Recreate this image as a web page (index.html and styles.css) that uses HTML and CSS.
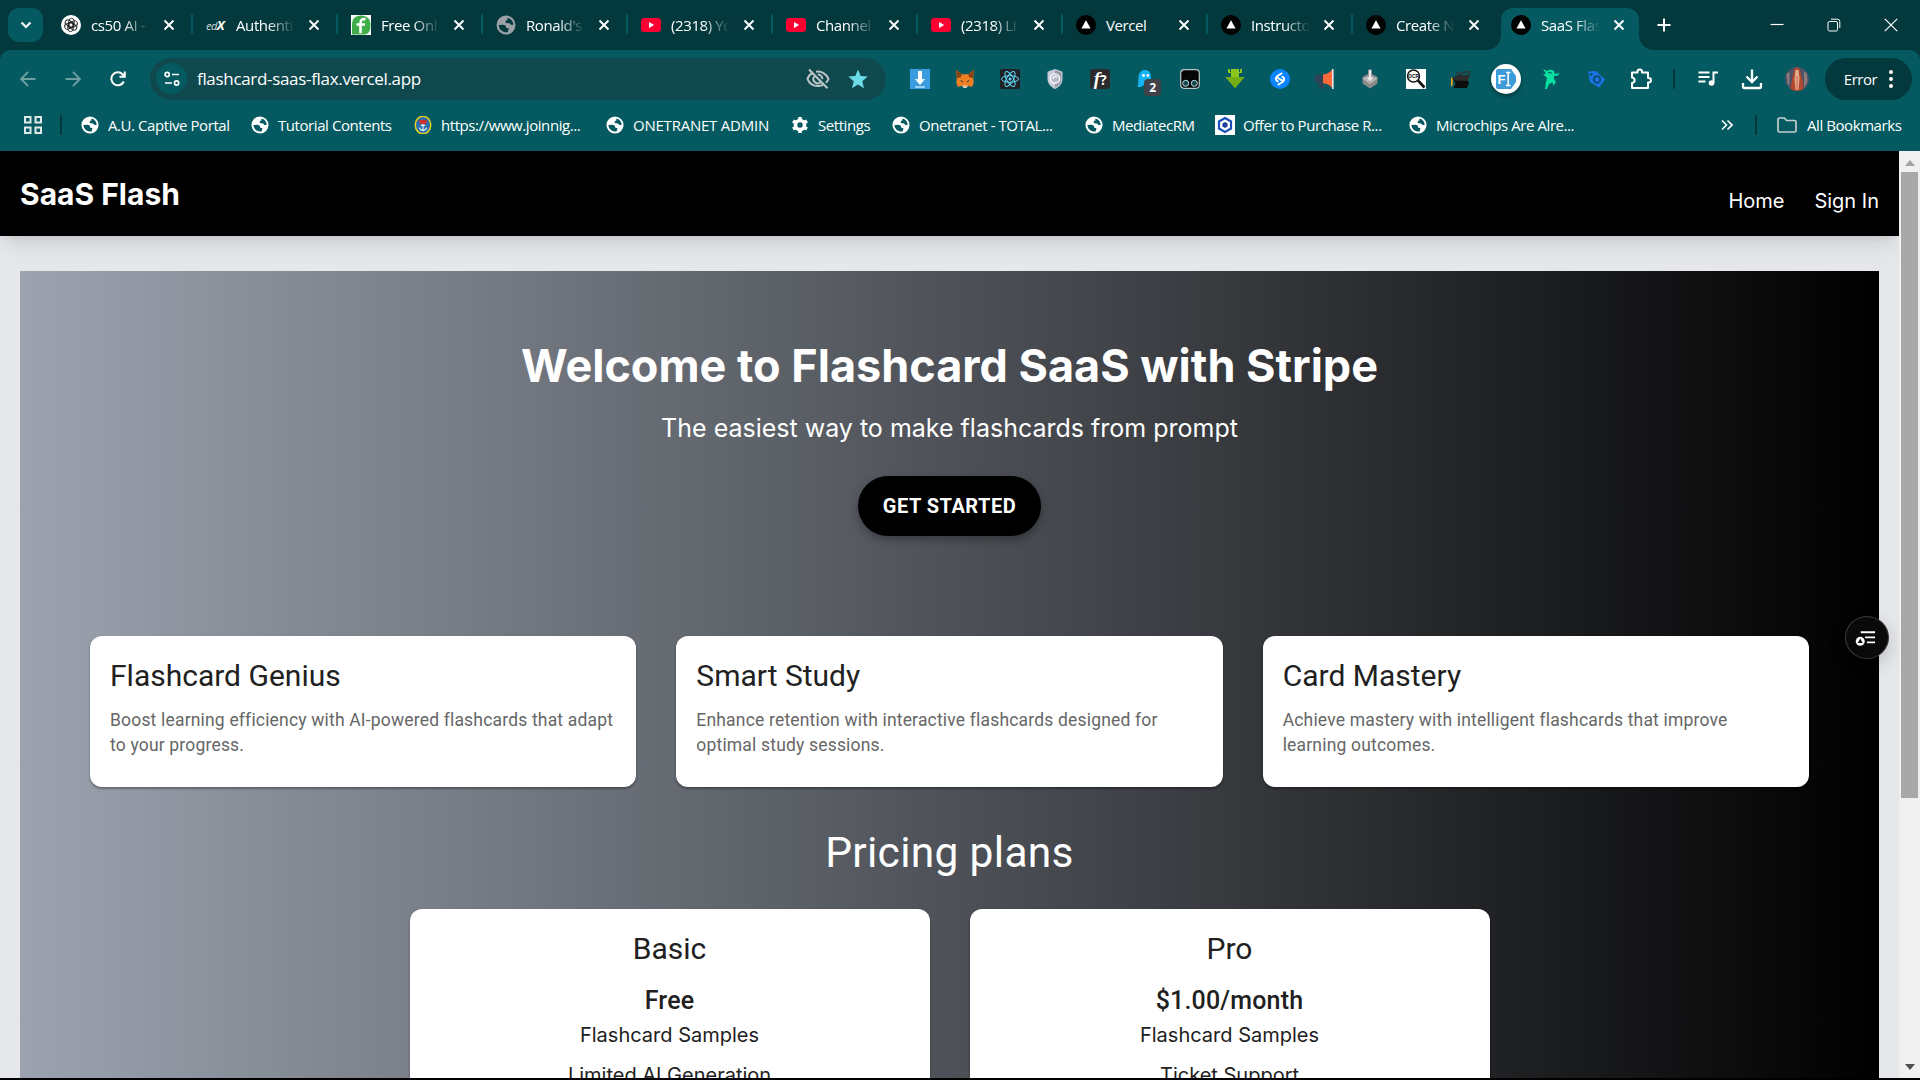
FILE: index.html
```html
<!DOCTYPE html>
<html lang="en">
<head>
<meta charset="utf-8">
<title>SaaS Flash</title>
<link rel="stylesheet" href="styles.css">
</head>
<body>
<svg class="defs" aria-hidden="true">
  <symbol id="x" viewBox="0 0 12 12"><path d="M1.5 1.5l9 9M10.500 1.500l-9 9" stroke="#fff" stroke-width="1.9" fill="none"/></symbol>
  <symbol id="globe" viewBox="0 0 20 20"><path d="M10 .5a9.500 9.500 0 1 0 0 19 9.500 9.500 0 0 0 0-19zM11.500 2.800C15 3.500 17.300 6.300 17.400 9.600 16 10.600 14.500 9.800 13.500 8.300L10.500 8C8.800 7.300 9.300 5.500 11.500 5zM2.700 10L7.300 9.800C9.800 10 10.300 11.800 10.300 13L12.800 13.600 11.800 17.200C7 17.800 2.900 14.600 2.700 10z" fill="currentColor" fill-rule="evenodd"/></symbol>
  <symbol id="yt" viewBox="0 0 20 20"><rect x="0" y="3" width="20" height="14" rx="3.500" fill="#ff0033"/><path d="M8 6.900v6.200l5.200-3.100z" fill="#fff"/></symbol>
  <symbol id="vercel" viewBox="0 0 20 20"><circle cx="10" cy="10" r="10" fill="#000"/><path d="M10 5.200l4.600 8.300H5.400z" fill="#fff"/></symbol>
</svg>

<div class="tabstrip">
  <div class="tab-search"><svg width="14" height="10" viewBox="0 0 14 10"><path d="M2.500 2.500L7 7l4.500-4.500" stroke="#fff" stroke-width="2.200" fill="none"/></svg></div>
  <div class="tabs">
    <div class="tab"><svg class="fav" viewBox="0 0 20 20"><circle cx="10" cy="10" r="10" fill="#fff"/><g fill="none" stroke="#222" stroke-width=".9"><rect id="petal" x="7.800" y="3.400" width="5.400" height="9" rx="2.700"/><use href="#petal" transform="rotate(60 10 10)"/><use href="#petal" transform="rotate(120 10 10)"/><use href="#petal" transform="rotate(180 10 10)"/><use href="#petal" transform="rotate(240 10 10)"/><use href="#petal" transform="rotate(300 10 10)"/></g></svg><span class="label">cs50 AI -</span><svg class="close"><use href="#x"/></svg></div>
    <div class="tab"><span class="fav edx">ed<b>X</b></span><span class="label">Authenti</span><svg class="close"><use href="#x"/></svg></div>
    <div class="tab"><svg class="fav" viewBox="0 0 20 20"><rect width="20" height="20" fill="#fff"/><path d="M10 .5c6 0 9.500 3.500 9.500 9.500s-2 9.500-6 9.500H1V10C1 4 4 .5 10 .5z" fill="#3fae49"/><path d="M14.500 4.200c-3.800-.5-5 1-5 4v10M5.500 9.500h8.500" stroke="#fff" stroke-width="2.600" fill="none"/></svg><span class="label">Free Onl</span><svg class="close"><use href="#x"/></svg></div>
    <div class="tab"><svg class="fav grey"><use href="#globe"/></svg><span class="label">Ronald's</span><svg class="close"><use href="#x"/></svg></div>
    <div class="tab"><svg class="fav"><use href="#yt"/></svg><span class="label">(2318) Yo</span><svg class="close"><use href="#x"/></svg></div>
    <div class="tab"><svg class="fav"><use href="#yt"/></svg><span class="label">Channel</span><svg class="close"><use href="#x"/></svg></div>
    <div class="tab"><svg class="fav"><use href="#yt"/></svg><span class="label">(2318) Li</span><svg class="close"><use href="#x"/></svg></div>
    <div class="tab"><svg class="fav"><use href="#vercel"/></svg><span class="label whole">Vercel</span><svg class="close"><use href="#x"/></svg></div>
    <div class="tab"><svg class="fav"><use href="#vercel"/></svg><span class="label">Instructo</span><svg class="close"><use href="#x"/></svg></div>
    <div class="tab last"><svg class="fav"><use href="#vercel"/></svg><span class="label">Create N</span><svg class="close"><use href="#x"/></svg></div>
    <div class="tab active"><svg class="fav"><use href="#vercel"/></svg><span class="label">SaaS Flas</span><svg class="close"><use href="#x"/></svg></div>
  </div>
  <svg class="plus" viewBox="0 0 14 14"><path d="M7 .5v13M.5 7h13" stroke="#fff" stroke-width="2"/></svg>
  <div class="win">
    <svg viewBox="0 0 14 14"><path d="M.5 6.500h13" stroke="#fff" stroke-width="1.200"/></svg>
    <svg viewBox="0 0 14 14"><rect x="1" y="3.500" width="9.500" height="9.500" rx="1.500" stroke="#fff" fill="none"/><path d="M4 1.200h6.500a2.300 2.300 0 0 1 2.300 2.300V10" stroke="#fff" fill="none"/></svg>
    <svg viewBox="0 0 14 14"><path d="M.8.8l12.400 12.400M13.200.8L.8 13.200" stroke="#fff" stroke-width="1.200"/></svg>
  </div>
</div>

<div class="toolbar">
  <div class="navrow">
    <div class="navbtns">
      <svg class="dim" viewBox="0 0 16 16"><path d="M15.500 8H1.500M8 1L1 8l7 7" stroke="currentColor" stroke-width="1.800" fill="none"/></svg>
      <svg class="dim" viewBox="0 0 16 16"><path d="M.5 8h14M8 1l7 7-7 7" stroke="currentColor" stroke-width="1.800" fill="none"/></svg>
      <svg viewBox="0 0 16 16"><path d="M13.800 10.500A6.500 6.500 0 1 1 12.600 3.300L14.500 5.300M14.800.5v5.300H9.500" stroke="#fff" stroke-width="2" fill="none"/></svg>
    </div>
    <div class="url">
      <div class="site"><svg width="16" height="16" viewBox="0 0 16 16" fill="none" stroke="#fff" stroke-width="1.700"><circle cx="3.200" cy="3.500" r="2.100"/><path d="M8 3.500h7M1 12h7"/><circle cx="12.600" cy="12" r="2.100"/></svg></div>
      <span class="address">flashcard-saas-flax.vercel.app</span>
      <svg class="eye" viewBox="0 0 24 22" fill="none" stroke="#bcc6c7" stroke-width="2"><path d="M7.500 4.500C4.800 5.700 2.500 8 1.500 10.800c1.700 4.500 6 7.200 10.500 7.200 1.700 0 3.300-.4 4.700-1M10 3.700c5.300-.8 10.500 2 12.500 7.100-.6 1.500-1.500 2.800-2.600 3.900M3 1.500l18.500 18.700M8.300 8.500a4.200 4.200 0 0 0 6 5.800M11.800 6.600a4.200 4.200 0 0 1 4.500 4.600"/></svg>
      <svg class="star" viewBox="0 0 20 20"><path d="M10 .5l2.700 6.600 7 .5-5.400 4.600 1.700 7L10 15.400l-6 3.800 1.700-7L.3 7.600l7-.5z" fill="#6cdbe8"/></svg>
    </div>
    <div class="exts">
      <svg viewBox="0 0 20 20"><rect width="20" height="20" fill="#3a9be0"/><path d="M8 2h4v8h3l-5 6-5-6h3zM5 17.500h10v1H5z" fill="#fff"/></svg>
      <svg viewBox="0 0 20 20"><path d="M1 1l6 4.300h6L19 1l-.8 8 .5 5-1.700 4-4-1.200L11 19H9l-2-2.200L3 18l-1.700-4 .5-5z" fill="#ef7f22"/><path d="M1 1l6 4.300-1.500 3.200L2 9zM19 1l-6 4.300 1.500 3.200L18 9z" fill="#8a4315"/><path d="M5 11l3 1-.5 1.500zM15 11l-3 1 .5 1.500z" fill="#263b47"/><path d="M7 16.500h6L11.500 19h-3z" fill="#d8c6b5"/></svg>
      <svg viewBox="0 0 20 20"><rect width="20" height="20" rx="2" fill="#202325"/><g fill="none" stroke="#61dafb" stroke-width="1"><ellipse cx="10" cy="10" rx="8.500" ry="3.300"/><ellipse cx="10" cy="10" rx="8.500" ry="3.300" transform="rotate(60 10 10)"/><ellipse cx="10" cy="10" rx="8.500" ry="3.300" transform="rotate(120 10 10)"/></g><circle cx="10" cy="10" r="1.500" fill="#61dafb"/></svg>
      <svg viewBox="0 0 20 20"><path d="M10 0l7.500 2.800v7c0 5-3.500 8.500-7.500 10.200C6 18.300 2.500 14.800 2.500 9.800v-7z" fill="#c9ccd8"/><path d="M10 1.200l6.300 2.400v6.200c0 4.300-2.800 7.300-6.300 8.900z" fill="#9498a8"/><circle cx="10" cy="9.500" r="4.600" fill="#b4b8c6" stroke="#fff" stroke-width="1.400"/><path d="M8 10a2.300 2.300 0 0 1 4-1.800" stroke="#fff" stroke-width="1.400" fill="none"/></svg>
      <div class="fq"><i>f</i>?</div>
      <div class="ghost"><svg viewBox="0 0 20 20"><path d="M2.500 18c1-2 .7-6 1-10C4 3.500 6.500 1 10 1s6 2.500 6 7v10l-3-2-2.500 2L8 16l-2 2z" fill="#15b2f4"/><circle cx="8.500" cy="6.500" r="1.400" fill="#fff"/><circle cx="12.800" cy="6.500" r="1.400" fill="#fff"/></svg><b>2</b></div>
      <svg viewBox="0 0 20 20"><rect x=".7" y=".7" width="18.600" height="18.600" rx="3.500" fill="#050505" stroke="#b9c6c8" stroke-width="1.200"/><circle cx="5.700" cy="14.300" r="3" fill="#17454a" stroke="#b8e0e4"/><circle cx="14.300" cy="14.300" r="3" fill="#17454a" stroke="#b8e0e4"/></svg>
      <svg viewBox="0 0 20 20"><path d="M3 0h2v3h1V0h8v3h1V0h2v4h-3v4h5.500L10 19 .5 8H6V4H3z" fill="#8cc61d"/><path d="M.5 8h19L10 19z" fill="#74ad16"/></svg>
      <svg viewBox="0 0 20 20"><circle cx="10" cy="10" r="10" fill="#0a84ff"/><path d="M11.500 4.500L7.500 7c-2.500 1.600-2 4.300.2 5.300M8.500 15.500l4-2.500c2.500-1.600 2-4.300-.2-5.300M8 9l4 2.300" stroke="#fff" stroke-width="2" fill="none" stroke-linecap="round"/></svg>
      <svg viewBox="0 0 20 20"><path d="M0 7c2-1.500 5-1.500 8-1.500v9H8l1 5H4.500l-1.200-5C1 14 0 12 0 11z" fill="#2f4257"/><path d="M8 5.500C12 5 15 3.500 17 .8v18c-2-2.800-5-4.300-9-4.600z" fill="#ff6a3a"/><path d="M17 0h1.600v20H17z" fill="#e2e8ec"/></svg>
      <svg viewBox="0 0 20 20"><path d="M10 4l7.500 4v6.500L10 19.500l-7.500-5V8z" fill="#8a8a8a"/><path d="M10 6l7.500 3.500L10 15 2.500 9.500z" fill="#b9b9b9"/><path d="M8.500.8h3V8h3L10 13 5.500 8h3z" fill="#e8e8e8" stroke="#888" stroke-width=".6"/></svg>
      <div class="ocr"><svg viewBox="0 0 20 20"><rect width="20" height="20" fill="#fff"/><circle cx="7.500" cy="7" r="6" fill="#f7f7f7" stroke="#111" stroke-width="1.400"/><path d="M12 11.500l6.500 7" stroke="#111" stroke-width="2.600"/></svg><span>OCR</span></div>
      <svg viewBox="0 0 22 20"><path d="M0 8l2 1-.500 9H0z" fill="#f6a21c"/><path d="M2 10h17l-1 2 2 2-2.500 6H2.500L5 15z" fill="#0c0c0c"/><path d="M6 3c4 3 8-1 11-1 3-.5 5 1 3 2" stroke="#333" stroke-width="1.500" fill="none"/><path d="M1 9.500l8-5 4 1.500 8-1-2.500 7H5z" fill="#2c2c2c"/></svg>
      <div class="fi"><svg viewBox="0 0 20 20"><path d="M0 2a2 2 0 0 1 2-2h13l5 7v6l-5 7H2a2 2 0 0 1-2-2z" fill="#3d9bd9"/><path d="M10 3.500h4.500M10 16.500h4.500M12.200 3.500v13" stroke="#fff" stroke-width="1.500"/></svg><b>F</b></div>
      <svg viewBox="0 0 20 20"><path d="M2 0l4 2 3-1.500 3.500 1L14 5l4.500-1L17 6.500l-4 .5 0 3 2 3-2.500 3.500-1-3L8 15l-2 5H4l1-7 1-4-4-4 3 0z" fill="#0bdf9f"/><path d="M7 3.500l4 .5" stroke="#045a60" stroke-width="1.200"/></svg>
      <svg viewBox="0 0 20 20"><path d="M2 2.500l8-.5 9 8.500-6 8-9-5.500z" fill="#1b74e8"/><circle cx="5" cy="5.500" r="1.500" fill="#045a60"/><circle cx="11" cy="10.500" r="3.200" fill="none" stroke="#0a4f74" stroke-width="2"/></svg>
      <svg class="puzzle" viewBox="0 0 22 22"><path d="M2 4.500h5.500V3.800a2 2 0 0 1 4.500 0v.7h6V10h.7a2 2 0 0 1 0 4.500H18V20H2v-5c3.500-.5 3.500-5 0-5.500z" stroke="#fff" stroke-width="2" fill="none" stroke-linejoin="round"/></svg>
    </div>
    <i class="sep"></i>
    <div class="tools">
      <svg viewBox="0 0 22 22"><path d="M1.500 4.500h11M1.500 9h11M1.500 13.500h7M16.500 4v11M15.500 4.500H21" stroke="#fff" stroke-width="2" fill="none"/><circle cx="14.500" cy="15" r="2.800" fill="#fff"/></svg>
      <svg viewBox="0 0 22 22"><path d="M11 1.500v12M5.500 8.500L11 14l5.500-5.500M2 15v3.500A1.500 1.500 0 0 0 3.500 20h15a1.500 1.500 0 0 0 1.500-1.500V15" stroke="#fff" stroke-width="2.300" fill="none"/></svg>
      <svg class="avatar" viewBox="0 0 24 24"><circle cx="12" cy="12" r="12" fill="#4a5368"/><path d="M1.500 7l3-2v13l-2-1zM19 4l3 3 .5 8-3.500 6z" fill="#8c7a78"/><path d="M9 3c2-4 5-3 6 0l3 12 .5 7a12 12 0 0 1-13 0L7 12z" fill="#b0472f"/><path d="M10.500 3h3l1 8-1 12h-3l-1-11z" fill="#e5ad91"/><path d="M12 9v14" stroke="#c95f45" stroke-width="1"/></svg>
    </div>
    <div class="error">Error<svg width="4" height="20" viewBox="0 0 4 20" fill="#fff"><circle cx="2" cy="3" r="2"/><circle cx="2" cy="10" r="2"/><circle cx="2" cy="17" r="2"/></svg></div>
  </div>
  <div class="bookmarks">
    <svg class="grid" viewBox="0 0 18 18" fill="none" stroke="#dfe9ea" stroke-width="2"><rect x="1" y="1" width="5.500" height="5.500"/><rect x="11.500" y="1" width="5.500" height="5.500"/><rect x="1" y="11.500" width="5.500" height="5.500"/><rect x="11.500" y="11.500" width="5.500" height="5.500"/></svg>
    <i class="sep"></i>
    <div class="marks">
      <div><svg><use href="#globe"/></svg>A.U. Captive Portal</div>
      <div><svg><use href="#globe"/></svg>Tutorial Contents</div>
      <div><svg viewBox="0 0 20 20"><ellipse cx="10" cy="10" rx="8.600" ry="9.700" fill="#2c6fae" stroke="#e8d41c" stroke-width="1.600"/><path d="M5 4l3 1 2-1 2 1 3-1-2 5H7z" fill="#d22f2a"/><path d="M10 9v8M6 13c1 4 7 4 8 0M7.500 10.500h5" stroke="#e8eef2" stroke-width="1.300" fill="none"/></svg>https://www.joinnig...</div>
      <div class="wide"><svg><use href="#globe"/></svg>ONETRANET ADMIN</div>
      <div><svg viewBox="0 0 20 20"><circle cx="10" cy="10" r="5" stroke="#fff" stroke-width="4" fill="none"/><path d="M10 1v3M10 16v3M2.200 5.500l2.600 1.500M15.200 13l2.600 1.500M2.200 14.500L4.800 13M15.200 7l2.600-1.500" stroke="#fff" stroke-width="4"/></svg>Settings</div>
      <div><svg><use href="#globe"/></svg>Onetranet - TOTAL...</div>
      <div><svg><use href="#globe"/></svg>MediatecRM</div>
      <div><svg class="hex" viewBox="0 0 20 20"><rect width="20" height="20" fill="#fff"/><path d="M10 3l6 3.500v7L10 17l-6-3.500v-7z" fill="none" stroke="#1b4fb8" stroke-width="2.200"/><path d="M10 7l2.600 1.500v3L10 13l-2.600-1.500v-3z" fill="#1b3f9c"/></svg>Offer to Purchase R...</div>
      <div><svg><use href="#globe"/></svg>Microchips Are Alre...</div>
    </div>
    <svg class="more" viewBox="0 0 12 12"><path d="M1 1.500L5.500 6 1 10.500M6.500 1.500L11 6l-4.500 4.500" stroke="#fff" stroke-width="1.600" fill="none"/></svg>
    <i class="sep"></i>
    <div class="all"><svg viewBox="0 0 20 16"><path d="M1 2.500A1.500 1.500 0 0 1 2.500 1h5l2 2.500h8A1.500 1.500 0 0 1 19 5v8.500a1.500 1.500 0 0 1-1.500 1.500h-15A1.500 1.500 0 0 1 1 13.500z" fill="none" stroke="#c6cfd0" stroke-width="1.700"/></svg>All Bookmarks</div>
  </div>
</div>

<div class="viewport">
  <div class="page">
    <header class="header"><h1>SaaS Flash</h1><nav><a>Home</a><a>Sign In</a></nav></header>
    <main class="hero">
      <h2>Welcome to Flashcard SaaS with Stripe</h2>
      <p class="sub">The easiest way to make flashcards from prompt</p>
      <button class="cta">GET STARTED</button>
      <section class="features">
        <article><h3>Flashcard Genius</h3><p>Boost learning efficiency with AI-powered flashcards that adapt to your progress.</p></article>
        <article><h3>Smart Study</h3><p>Enhance retention with interactive flashcards designed for optimal study sessions.</p></article>
        <article><h3>Card Mastery</h3><p>Achieve mastery with intelligent flashcards that improve learning outcomes.</p></article>
      </section>
      <h2 class="pricing-title">Pricing plans</h2>
      <section class="plans">
        <article><h3>Basic</h3><h4>Free</h4><p>Flashcard Samples</p><p>Limited AI Generation</p></article>
        <article><h3>Pro</h3><h4>$1.00/month</h4><p>Flashcard Samples</p><p>Ticket Support</p></article>
      </section>
    </main>
  </div>
  <div class="scrollbar">
    <svg viewBox="0 0 10 6"><path d="M5 0l5 6H0z" fill="#a3a3a3"/></svg>
    <div class="thumb"></div>
    <svg class="down" viewBox="0 0 10 6"><path d="M0 0h10L5 6z" fill="#505050"/></svg>
  </div>
  <div class="float"><svg viewBox="0 0 22 16"><path d="M6 2h15M10.500 7.300H21M12.500 12.500H21" stroke="#fff" stroke-width="1.900"/><circle cx="5.500" cy="11.500" r="4.700" fill="#fff"/><path d="M5.500 8.500l2.600 4.700H2.900z" fill="#0a0a0a"/></svg></div>
</div>
</body>
</html>
```
FILE: styles.css
```css
* { box-sizing: border-box; margin: 0; padding: 0; }
body { width: 1920px; height: 1080px; overflow: hidden; background: #000; display: flex; flex-direction: column; font-family: "Open Sans", "Noto Sans", sans-serif; color: #fff; }
svg { display: block; flex: none; }
.defs { position: absolute; width: 0; height: 0; }

.tabstrip { height: 50px; background: #03383d; display: flex; align-items: center; flex: none; padding-left: 8px; }
.tab-search { width: 35px; height: 34px; border-radius: 11px; background: #045a60; display: flex; align-items: center; justify-content: center; }
.tabs { display: flex; margin-left: 4px; height: 50px; padding-top: 8px; }
.tab { width: 145px; height: 34px; display: flex; align-items: center; position: relative; padding-left: 14px; font-size: 15px; }
.tab::after { content: ""; position: absolute; right: -1px; top: 6px; width: 2px; height: 20px; background: #045a60; border-radius: 1px; }
.fav { width: 20px; height: 20px; flex: none; margin-right: 10px; }
.grey { color: #9aa0a6; }
.edx { font: italic 11px/20px "Open Sans", sans-serif; letter-spacing: -.6px; white-space: nowrap; color: #d4d9da; }
.edx b { color: #fff; font-size: 13px; }
.label { width: 64px; flex: none; white-space: nowrap; letter-spacing: -.4px; mask-image: linear-gradient(90deg, #000 50%, transparent 92%); }
.label.whole { mask-image: none; }
.close { width: 12px; height: 12px; margin-left: 8px; }
.tab.last::after, .tab.active::after { display: none; }
.tab.active { background: #045a60; width: 138px; margin-left: 4px; height: 42px; border-radius: 12px 12px 0 0; padding-left: 10px; padding-bottom: 8px; }
.tab.active::before { content: ""; position: absolute; bottom: 0; left: -14px; width: 166px; height: 14px; background: radial-gradient(circle at 0 0, transparent 13.500px, #045a60 14px) left / 14px 14px no-repeat, radial-gradient(circle at 100% 0, transparent 13.500px, #045a60 14px) right / 14px 14px no-repeat; }
.plus { width: 14px; height: 14px; margin-left: 18px; }
.win { display: flex; margin-left: auto; gap: 43px; padding-right: 22px; }
.win svg { width: 14px; height: 14px; }

.toolbar { height: 101px; background: radial-gradient(circle at 10px 10px, #045a60 9.500px, #03383d 10px) left top / 10px 10px no-repeat, radial-gradient(circle at 0 10px, #045a60 9.500px, #03383d 10px) right top / 10px 10px no-repeat, #045a60; flex: none; }
.navrow { display: flex; height: 57px; align-items: center; }
.navbtns { display: flex; width: 150px; padding-left: 20px; gap: 29px; }
.navbtns svg { width: 16px; height: 16px; }
.dim { color: #6d9fa3; }
.url { width: 736px; height: 42px; border-radius: 21px; background: #0f484d; display: flex; align-items: center; padding: 0 18px 0 6px; }
.site { width: 31px; height: 31px; border-radius: 50%; background: #045a60; display: flex; align-items: center; justify-content: center; }
.address { margin-left: 10px; font-size: 17px; letter-spacing: -.32px; flex: 1; }
.eye { width: 24px; height: 22px; margin-right: 18px; }
.star { width: 20px; height: 20px; }
.exts { display: flex; gap: 25.050px; margin-left: 24px; align-items: center; }
.exts > svg, .exts > div { width: 20px; height: 20px; flex: none; }
.exts > div svg { width: 20px; height: 20px; }
.fq { background: #2b2b2b; border-radius: 3px; font: bold 14px/19px "Open Sans", sans-serif; text-align: center; }
.fq i { font-family: "Liberation Serif", serif; font-size: 19px; }
.ghost { position: relative; }
.ghost b { position: absolute; left: 9px; top: 10px; width: 17px; height: 17px; background: #40434a; border-radius: 4px; font-size: 12px; line-height: 17px; text-align: center; }
.ocr { position: relative; }
.ocr span { position: absolute; left: 2.500px; top: 2px; font: bold 5px/10px "Liberation Sans", sans-serif; color: #111; }
.exts .fi { width: 30px; height: 30px; margin: 0 -5px; background: #fff; border-radius: 50%; display: flex; align-items: center; justify-content: center; position: relative; box-shadow: 0 2px 4px #0006; }
.fi b { position: absolute; left: 7px; top: 8px; font: bold 13px/15px "Liberation Sans", sans-serif; }
.exts .puzzle { width: 22px; height: 22px; margin-left: -1px; }
.sep { width: 2px; height: 20px; border-radius: 1px; background: #03383d; flex: none; }
.navrow > .sep { margin-left: 21px; }
.tools { display: flex; align-items: center; gap: 22px; margin-left: 22px; }
.tools svg { width: 22px; height: 22px; }
.tools .avatar { width: 24px; height: 24px; }
.error { margin-left: 16px; width: 87px; height: 42px; border-radius: 21px; background: #03383d; display: flex; align-items: center; padding-left: 19px; font-size: 15px; letter-spacing: -.45px; gap: 12px; }

.bookmarks { display: flex; align-items: center; height: 36px; font-size: 15px; letter-spacing: -.43px; white-space: nowrap; }
.grid { width: 18px; height: 18px; margin-left: 24px; }
.bookmarks > .sep { margin-left: 18px; }
.marks { display: grid; grid-template-columns: 170px 163px 192px 185px 101px 193px 131px 193px 300px; margin-left: 19px; width: 1640px; flex: none; }
.marks div { display: flex; align-items: center; gap: 9px; }
.marks .wide { letter-spacing: -.23px; }
.marks svg { width: 18px; height: 18px; }
.marks .hex { width: 20px; height: 20px; margin: 0 -1px; }
.more { width: 12px; height: 12px; }
.bookmarks .marks + .more + .sep { margin-left: 22px; }
.all { display: flex; align-items: center; gap: 10px; margin-left: 20px; }
.all svg { width: 20px; height: 16px; }

.viewport { height: 927px; display: flex; position: relative; overflow: hidden; flex: none; }
.page { width: 1899px; background: #e5e7eb; overflow: hidden; font-family: Roboto, sans-serif; }
.header { height: 85px; background: #000; display: flex; justify-content: space-between; padding: 0 20px; position: relative; font-family: Inter, sans-serif; box-shadow: 0 12px 19px -4px #0000001a, 0 5px 8px -5px #0000001a; }
.header h1 { font-size: 30px; line-height: 40px; margin-top: 23px; font-weight: 700; }
.header nav { display: flex; gap: 30px; margin-top: 35px; font-size: 20px; line-height: 30px; }
.hero { margin: 35px 20px 0; height: 1200px; background: linear-gradient(90deg, #9ca3af, #000); display: flex; flex-direction: column; align-items: center; padding: 70px 70px 0; }
.hero h2 { font: 700 45px/50px Inter, sans-serif; }
.sub { font: 400 25px/35px Inter, sans-serif; margin-top: 20px; }
.cta { width: 183px; height: 60px; margin-top: 30px; border: 0; border-radius: 30px; background: #000; color: #fff; font: 700 20px/30px Roboto, sans-serif; letter-spacing: .5px; box-shadow: 0 4px 8px #0000004d; }
.features { display: grid; grid-template-columns: repeat(3, 1fr); gap: 40px; width: 100%; margin-top: 100px; }
article { background: #fff; border-radius: 12px; box-shadow: 0 2px 2px #00000040, 0 1px 3px #00000020; color: #212121; }
.features article { height: 151px; padding: 20px; }
article h3 { font-size: 30px; line-height: 40px; font-weight: 400; }
.features p { margin-top: 12px; font-size: 17.500px; line-height: 25px; letter-spacing: .18px; color: #666; }
.hero .pricing-title { font: 400 42.500px/52px Roboto, sans-serif; letter-spacing: .3px; margin-top: 40px; }
.plans { display: grid; grid-template-columns: 520px 520px; gap: 40px; margin-top: 30px; text-align: center; }
.plans article { height: 400px; padding-top: 20px; }
.plans h4 { font-size: 25px; line-height: 40px; font-weight: 500; margin-top: 12px; letter-spacing: .18px; }
.plans p { font-family: Inter, sans-serif; font-size: 20px; line-height: 30px; margin: -1px 0 11px; }
.scrollbar { width: 21px; background: #f0f0f0; display: flex; flex-direction: column; align-items: center; padding-top: 9px; }
.scrollbar svg { width: 10px; height: 6px; }
.thumb { width: 17px; height: 626px; background: #a8a8a8; margin-top: 6px; }
.scrollbar .down { margin-top: auto; margin-bottom: 8px; }
.float { position: absolute; left: 1845px; top: 465px; width: 44px; height: 43px; border-radius: 50%; background: #0a0a0a; border: 1px solid #3c3c3c; display: flex; align-items: center; justify-content: center; box-shadow: 0 6px 18px #0000002e; }
.float svg { width: 21px; height: 16px; margin-left: -3px; }
```
